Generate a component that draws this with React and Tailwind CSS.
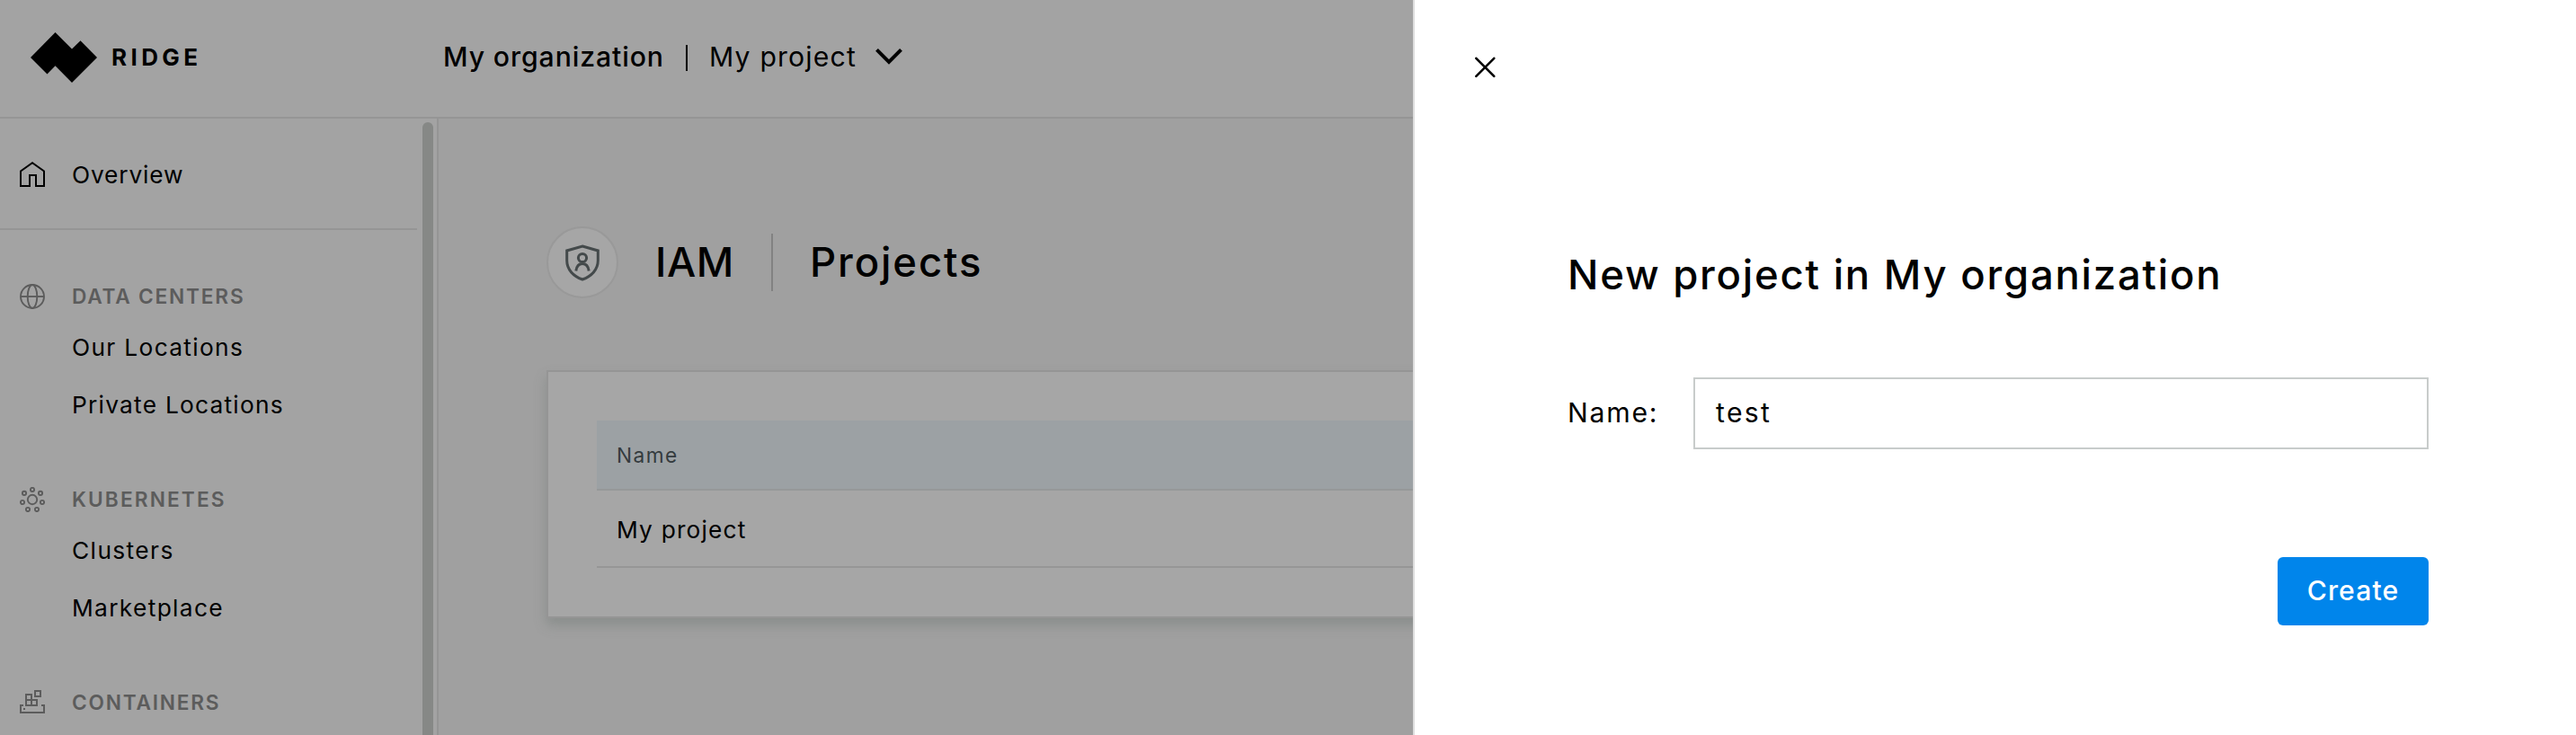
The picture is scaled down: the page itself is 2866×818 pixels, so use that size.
const HomeIcon = () => (
  <svg className="h-7 w-7 shrink-0 text-black" viewBox="0 0 28 28" fill="none" stroke="currentColor" strokeWidth="2">
    <path d="M1 27V10.5L14 1.3L27 10.5V27H18V15H11V27Z" />
  </svg>
);

const GlobeIcon = () => (
  <svg className="h-7 w-7 shrink-0" viewBox="0 0 28 28" fill="none" stroke="currentColor" strokeWidth="1.9">
    <circle cx="14" cy="14" r="13" />
    <ellipse cx="14" cy="14" rx="5.3" ry="13" />
    <path d="M1 14H27" />
  </svg>
);

const ClusterIcon = () => (
  <svg className="h-7 w-7 shrink-0" viewBox="0 0 28 28" fill="none" stroke="currentColor" strokeWidth="1.9">
    <circle cx="14" cy="14" r="5.2" />
    <circle cx="14" cy="2.9" r="2.1" />
    <circle cx="5" cy="6.9" r="2.1" />
    <circle cx="23" cy="6.9" r="2.1" />
    <circle cx="3" cy="17" r="2.1" />
    <circle cx="25" cy="17" r="2.1" />
    <circle cx="9" cy="25" r="2.1" />
    <circle cx="19" cy="25" r="2.1" />
  </svg>
);

const ContainersIcon = () => (
  <svg className="h-7 w-7 shrink-0" viewBox="0 0 28 28" fill="none" stroke="currentColor" strokeWidth="2">
    <path d="M4 17H1V25H27V17H24" />
    <path d="M7 17V5H13V17ZM7 11H19V17H7M17 1H23V7H17Z" />
    <path d="M4 21H6" />
  </svg>
);

const ShieldUserIcon = () => (
  <svg className="h-[42px] w-10 text-[#444a4b]" viewBox="0 0 40 42" fill="none" stroke="currentColor" strokeWidth="3">
    <path d="M20 3L37.3 8V19C37.3 29 30 36.500 20 40C10 36.500 2.700 29 2.700 19V8Z" />
    <circle cx="20" cy="16" r="4.6" />
    <path d="M12.800 30.500C13.500 25.500 16 22.500 20 22.500S26.500 25.500 27.200 30.500" />
  </svg>
);

const groups = [
  {
    Icon: GlobeIcon,
    title: "DATA CENTERS",
    track: "tracking-[1.77px]",
    items: [
      ["Our Locations", "tracking-[1.34px]"],
      ["Private Locations", "tracking-[1.24px]"],
    ],
  },
  {
    Icon: ClusterIcon,
    title: "KUBERNETES",
    track: "tracking-[2.1px]",
    items: [
      ["Clusters", "tracking-[1.4px]"],
      ["Marketplace", "tracking-[1.34px]"],
    ],
  },
  { Icon: ContainersIcon, title: "CONTAINERS", track: "tracking-[1.77px]", items: [] },
];

function Header() {
  return (
    <header className="flex h-[132px] shrink-0 items-center border-b-2 border-[#959595] bg-[#a3a3a3] pb-[3px]">
      <div className="flex w-[493px] shrink-0 items-center pl-[34px]">
        <svg className="h-14 w-[74px]" viewBox="0 0 74 56">
          <path d="M0 28L27.500 0L46 18.500L55.500 9.300L74 28L46 56L27.500 37.300L18.500 46.500Z" />
        </svg>
        <span className="ml-4 text-[26px] font-bold tracking-[4.4px]">RIDGE</span>
      </div>
      <div className="flex items-center whitespace-nowrap text-[30.2px]">
        <span className="w-[270px] font-medium tracking-[0.9px]">My organization</span>
        <span className="mt-[3px] h-[29px] w-0.5 bg-black" />
        <span className="ml-6 w-[185px] tracking-[1.17px]">My project</span>
        <svg className="h-5 w-[30px]" viewBox="0 0 30 20" fill="none" stroke="black" strokeWidth="4">
          <path d="M1.500 2.300L15 16L28.500 2.300" />
        </svg>
      </div>
    </header>
  );
}

function Sidebar() {
  return (
    <aside className="flex w-[488px] shrink-0 justify-between overflow-hidden border-r-2 border-[#959595] bg-[#a3a3a3]">
      <nav className="w-[464px]">
        <div className="flex h-[124px] items-center gap-[30px] border-b-2 border-[#959595] pl-[22px] pt-0.5">
          <HomeIcon />
          <span className="pt-[2px] text-[26.3px] tracking-[0.85px]">Overview</span>
        </div>
        {groups.map(({ Icon, title, track, items }) => (
          <section key={title} className="pt-[50px]">
            <div className="flex h-12 items-center gap-[30px] pl-[22px] text-[#5c5c5c]">
              <Icon />
              <span className={`pt-px text-[22.7px] font-semibold ${track}`}>{title}</span>
            </div>
            {items.map(([label, t]) => (
              <div key={label} className={`flex h-16 items-center pl-20 pt-[2px] text-[26.3px] ${t}`}>
                {label}
              </div>
            ))}
          </section>
        ))}
      </nav>
      <div className="mr-1 mt-1 h-[800px] w-3 rounded-t-full bg-[#868886]" />
    </aside>
  );
}

function Main() {
  return (
    <main className="flex-1 bg-[#a0a0a0] pl-[120px] pr-[120px] pt-[120px]">
      <div className="flex h-20 items-center whitespace-nowrap text-[45.5px] font-medium">
        <div className="flex h-20 w-20 items-center justify-center rounded-full border-2 border-[#999999] bg-[#a6a6a6]">
          <ShieldUserIcon />
        </div>
        <span className="ml-[41px] w-[129px] tracking-[0.6px]">IAM</span>
        <span className="h-16 w-0.5 bg-[#828282]" />
        <span className="ml-[41px] tracking-[1.86px]">Projects</span>
      </div>
      <div className="mt-20 h-[276px] border-2 border-[#959595] bg-[#a6a6a6] px-[54px] pt-[54px] shadow-[0_8px_12px_rgba(100,112,106,0.35)]">
        <div className="flex h-[78px] items-center border-b-2 border-[#969899] bg-[#9ca1a4] pl-[22px] pt-[3px] text-[22.7px] tracking-[1.43px] text-[#343b3e]">
          Name
        </div>
        <div className="flex h-[86px] items-center border-b-2 border-[#969696] pl-[22px] pt-[3px] text-[26.3px] tracking-[1.19px]">
          My project
        </div>
      </div>
    </main>
  );
}

function Drawer() {
  return (
    <div className="absolute inset-y-0 right-0 w-[1294px] border-l-2 border-[#dedede] bg-white pl-[66px] pr-[164px] pt-[62px]">
      <svg className="block h-[26px] w-[26px]" viewBox="0 0 26 26" fill="none" stroke="black" strokeWidth="2.6" strokeLinecap="round">
        <path d="M2.300 2.800L22.300 22.800M22.300 2.800L2.300 22.800" />
      </svg>
      <form className="pl-[104px] pt-[188px]">
        <h1 className="h-[60px] whitespace-nowrap text-[45.5px] font-medium leading-[60px] tracking-[1.75px]">
          New project in My organization
        </h1>
        <div className="mt-[84px] flex h-20 items-center text-[30.2px]">
          <label className="w-[140px] tracking-[1.75px]">Name:</label>
          <div className="flex h-20 flex-1 items-center border-2 border-[#c8cccb] pl-[23px] tracking-[2.3px]">test</div>
        </div>
        <div className="mt-[120px] flex justify-end">
          <button type="button" className="h-[76px] w-[168px] rounded-md bg-[#0085eb] text-[30.2px] font-medium tracking-[1.08px] text-white">
            Create
          </button>
        </div>
      </form>
    </div>
  );
}

export default function App() {
  return (
    <div className="relative flex h-[818px] w-[2866px] flex-col overflow-hidden font-['Inter',sans-serif] text-black">
      <Header />
      <div className="flex min-h-0 flex-1">
        <Sidebar />
        <Main />
      </div>
      <Drawer />
    </div>
  );
}
